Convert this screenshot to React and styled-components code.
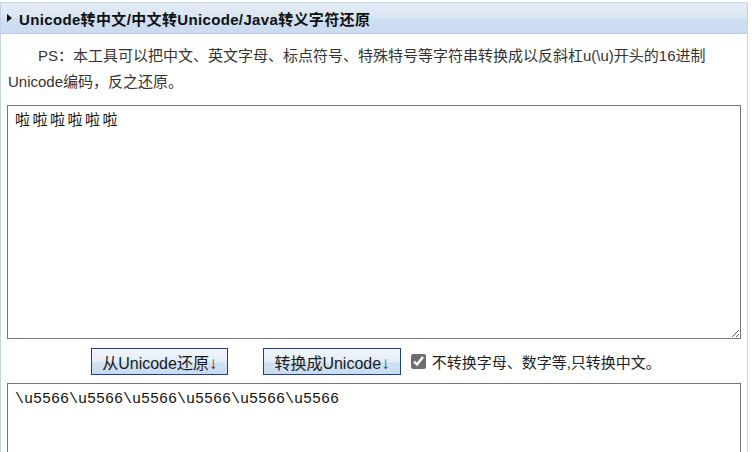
import React from 'react';
import styled, { createGlobalStyle } from 'styled-components';

const Global = createGlobalStyle`
  html, body {
    margin: 0;
    padding: 0;
    overflow: hidden;
    background: #fff;
  }
  body {
    font-family: 'Liberation Sans', Arial, 'Noto Sans CJK SC', sans-serif;
    color: #222;
  }
`;

const Page = styled.div`
  padding-top: 2px;
  width: 748px;
  height: 450px;
  overflow: hidden;
`;

const Panel = styled.div`
  border: 1px solid #c3d4ea;
  border-bottom: none;
  height: 460px;
`;

const Header = styled.div`
  height: 30px;
  display: flex;
  align-items: center;
  padding-left: 6px;
  background: linear-gradient(#e3ebf5 0%, #dbe6f2 48%, #cfdff2 52%, #cbdcf1 100%);
  border-bottom: 1px solid #b9cbe5;
`;

const Arrow = styled.span`
  width: 0;
  height: 0;
  border-top: 4.5px solid transparent;
  border-bottom: 4.5px solid transparent;
  border-left: 5px solid #111;
  margin-right: 7px;
`;

const Title = styled.h2`
  margin: 0;
  font-size: 15px;
  font-weight: bold;
  letter-spacing: 0.35px;
  color: #111;
`;

const Intro = styled.p`
  margin: 9px 0 0;
  padding: 0 8px 0 7px;
  font-size: 15px;
  line-height: 26px;
  text-indent: 2em;
  color: #333;
`;

const Area = styled.textarea`
  display: block;
  box-sizing: border-box;
  width: 734px;
  height: 234px;
  margin: ${(p) => (p.$top ? '10px' : '0')} 0 0 6px;
  padding: 7px;
  border: 1px solid #767676;
  font-family: 'Liberation Mono', 'Noto Sans CJK SC', monospace;
  font-size: 15px;
  line-height: 18px;
  letter-spacing: ${(p) => (p.$wide ? '2.5px' : '0')};
  color: #111;
  background: #fff;
  resize: both;
  outline: none;
`;

const Actions = styled.div`
  display: flex;
  align-items: center;
  justify-content: center;
  height: 44px;
  padding-left: 4px;
`;

const Button = styled.button`
  box-sizing: border-box;
  height: 27px;
  padding: 4px 10px 0;
  margin-right: ${(p) => (p.$gap ? '35px' : '10px')};
  border: 1px solid #1f3f8c;
  border-radius: 0;
  background: linear-gradient(#f2f6fb 0%, #e4edf8 50%, #d2e2f4 55%, #c8dbf1 100%);
  font-family: 'Liberation Sans', Arial, 'Noto Sans CJK SC', sans-serif;
  font-size: 16px;
  line-height: 22px;
  color: #1a1a1a;
  cursor: pointer;
`;

const Down = styled.span`
  color: ${(p) => p.$tone};
  font-size: 17px;
`;

const Check = styled.label`
  display: flex;
  align-items: center;
  font-size: 15px;
  color: #222;
`;

const Box = styled.input`
  width: 15px;
  height: 15px;
  margin: 0 6px 0 0;
  accent-color: #6e6e6e;
`;

export default function App() {
  return (
    <Page>
      <Global />
      <Panel>
        <Header>
          <Arrow />
          <Title>Unicode转中文/中文转Unicode/Java转义字符还原</Title>
        </Header>
        <Intro>
          PS：本工具可以把中文、英文字母、标点符号、特殊特号等字符串转换成以反斜杠u(\u)开头的16进制Unicode编码，反之还原。
        </Intro>
        <Area $top $wide defaultValue="啦啦啦啦啦啦" />
        <Actions>
          <Button $gap>
            从Unicode还原<Down $tone="#8a1010">↓</Down>
          </Button>
          <Button>
            转换成Unicode<Down $tone="#10408a">↓</Down>
          </Button>
          <Check>
            <Box type="checkbox" defaultChecked />
            不转换字母、数字等,只转换中文。
          </Check>
        </Actions>
        <Area defaultValue={'\\u5566\\u5566\\u5566\\u5566\\u5566\\u5566'} />
      </Panel>
    </Page>
  );
}
